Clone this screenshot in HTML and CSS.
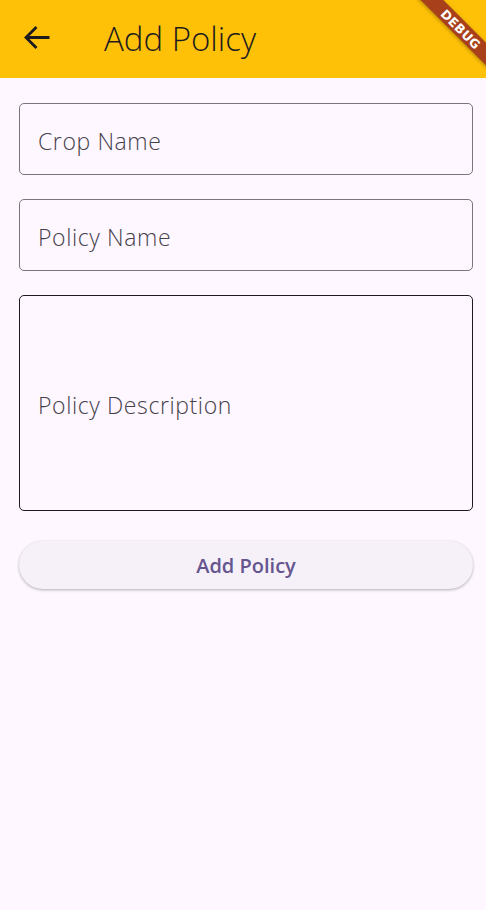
FILE: index.html
```html
<!DOCTYPE html>
<html>
<head>
<meta charset="utf-8">
<link rel="stylesheet" href="styles.css">
</head>
<body>
<header class="appbar">
  <button class="back" aria-label="Back">
    <svg width="28" height="28" viewBox="0 0 28 28"><path d="M3 13.5H26.5M13.5 3L3 13.5L13.5 24" fill="none" stroke="#1d1b20" stroke-width="2.8" stroke-linecap="butt" stroke-linejoin="miter"/></svg>
  </button>
  <h1 class="title">Add Policy</h1>
  <div class="debug"><span>DEBUG</span></div>
</header>
<main class="form">
  <div class="field"><span class="label">Crop Name</span></div>
  <div class="field"><span class="label">Policy Name</span></div>
  <div class="field field-tall"><span class="label">Policy Description</span></div>
  <button class="submit">Add Policy</button>
</main>
</body>
</html>
```
FILE: styles.css
```css
* { box-sizing: border-box; }
html, body { margin: 0; padding: 0; }
body {
  background: #fef7ff;
  font-family: "Open Sans", "Noto Sans", sans-serif;
  width: 486px;
  height: 910px;
  overflow: hidden;
}
.appbar {
  position: relative;
  height: 78px;
  background: #ffc107;
  display: flex;
  align-items: center;
  overflow: hidden;
}
.back {
  border: none;
  background: none;
  padding: 0;
  margin-left: 23px;
  margin-top: -2px;
  width: 28px;
  height: 28px;
  display: flex;
}
.title {
  margin: -1px 0 0 53px;
  font-weight: 350;
  font-size: 33px;
  color: #1d1b20;
  letter-spacing: 0;
}
.debug {
  position: absolute;
  top: 21px;
  right: -50px;
  width: 150px;
  height: 16px;
  background: #a9401c;
  transform: rotate(45deg);
  display: flex;
  align-items: center;
  justify-content: center;
  box-shadow: 0 1px 4px rgba(0,0,0,0.35);
}
.debug span {
  color: #fff;
  font-family: "DejaVu Sans", sans-serif;
  font-weight: 700;
  font-size: 12.5px;
  letter-spacing: 0.3px;
}
.form {
  padding: 25px 13px 0 19px;
  display: flex;
  flex-direction: column;
  gap: 24px;
}
.field {
  height: 72px;
  border: 1px solid #79747e;
  border-radius: 5px;
  display: flex;
  align-items: center;
  padding-left: 18px;
}
.field-tall {
  height: 216px;
  border: 1.5px solid #1d1b20;
}
.label {
  font-size: 23px;
  font-weight: 350;
  color: #45414b;
  letter-spacing: 0.6px;
  margin-top: 4px;
}
.submit {
  margin-top: 6px;
  height: 48px;
  border: none;
  border-radius: 24px;
  background: #f6f0f8;
  box-shadow: 0 1px 3px rgba(0,0,0,0.3);
  color: #65558f;
  font-family: inherit;
  font-size: 20px;
  font-weight: 600;
}
```
